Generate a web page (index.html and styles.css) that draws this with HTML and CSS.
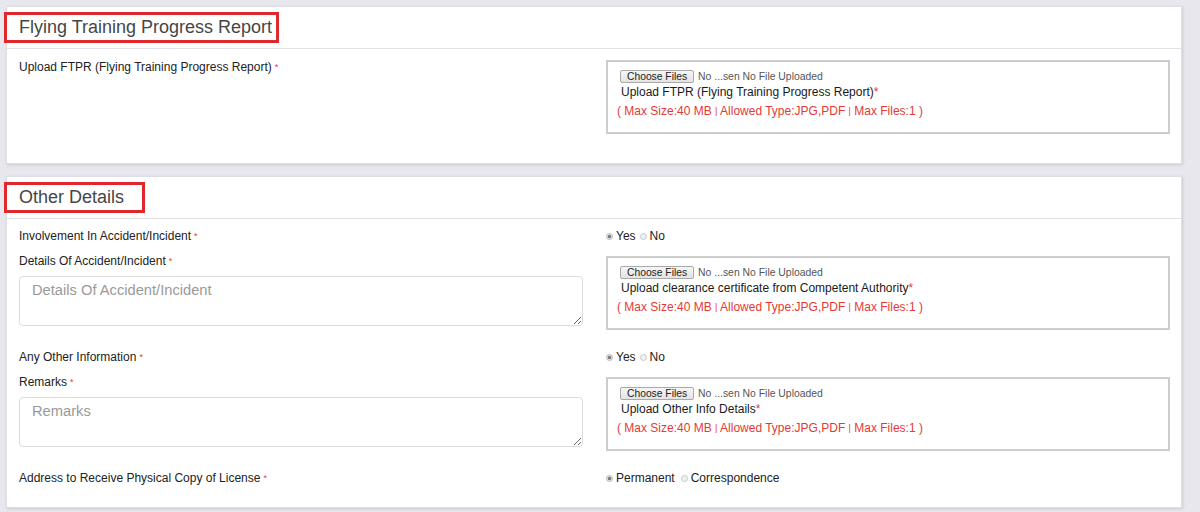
FILE: index.html
```html
<!DOCTYPE html>
<html lang="en">
<head>
<meta charset="utf-8">
<title>Flying Training Progress Report</title>
<link rel="stylesheet" href="styles.css">
</head>
<body>
<section class="card">
  <header class="card-head">
    <h2 class="title title-a">Flying Training Progress Report</h2>
  </header>
  <div class="card-body body-a">
    <div class="row">
      <div class="label">Upload FTPR (Flying Training Progress Report)<span class="req">*</span></div>
      <div class="filebox">
        <div class="file-line"><button class="choose" type="button">Choose Files</button><span class="nofile">No ...sen No File Uploaded</span></div>
        <div class="file-title">Upload FTPR (Flying Training Progress Report)<span class="star">*</span></div>
        <div class="file-hint">( Max Size:40 MB <span class="pipe">|</span> Allowed Type:JPG,PDF <span class="pipe">|</span> Max Files:1 )</div>
      </div>
    </div>
  </div>
</section>

<section class="card">
  <header class="card-head">
    <h2 class="title title-b">Other Details</h2>
  </header>
  <div class="card-body body-b">
    <div class="row row-radio">
      <div class="label">Involvement In Accident/Incident<span class="req">*</span></div>
      <div class="radios"><span class="radio on"></span><span class="opt">Yes</span><span class="radio"></span><span class="opt">No</span></div>
    </div>
    <div class="row row-file">
      <div>
        <div class="label">Details Of Accident/Incident<span class="req">*</span></div>
        <textarea class="area" placeholder="Details Of Accident/Incident"></textarea>
      </div>
      <div class="filebox">
        <div class="file-line"><button class="choose" type="button">Choose Files</button><span class="nofile">No ...sen No File Uploaded</span></div>
        <div class="file-title">Upload clearance certificate from Competent Authority<span class="star">*</span></div>
        <div class="file-hint">( Max Size:40 MB <span class="pipe">|</span> Allowed Type:JPG,PDF <span class="pipe">|</span> Max Files:1 )</div>
      </div>
    </div>
    <div class="row row-radio">
      <div class="label">Any Other Information<span class="req">*</span></div>
      <div class="radios"><span class="radio on"></span><span class="opt">Yes</span><span class="radio"></span><span class="opt">No</span></div>
    </div>
    <div class="row row-file">
      <div>
        <div class="label">Remarks<span class="req">*</span></div>
        <textarea class="area" placeholder="Remarks"></textarea>
      </div>
      <div class="filebox">
        <div class="file-line"><button class="choose" type="button">Choose Files</button><span class="nofile">No ...sen No File Uploaded</span></div>
        <div class="file-title">Upload Other Info Details<span class="star">*</span></div>
        <div class="file-hint">( Max Size:40 MB <span class="pipe">|</span> Allowed Type:JPG,PDF <span class="pipe">|</span> Max Files:1 )</div>
      </div>
    </div>
    <div class="row row-last">
      <div class="label">Address to Receive Physical Copy of License<span class="req">*</span></div>
      <div class="radios"><span class="radio on"></span><span class="opt tight">Permanent</span><span class="radio"></span><span class="opt">Correspondence</span></div>
    </div>
  </div>
</section>
</body>
</html>
```

FILE: styles.css
```css
* { box-sizing: border-box; }

body {
  margin: 0;
  padding: 6px 18px 0 6px;
  background: #e8e7ee;
  font-family: "Liberation Sans", Arial, sans-serif;
  color: #333;
}

.card {
  background: #fff;
  border: 1px solid #dedde3;
  box-shadow: 1px 1px 3px rgba(0, 0, 0, 0.12);
  margin-bottom: 12px;
}

.card-head {
  height: 42px;
  border-bottom: 1px solid #e2e2e6;
  padding-top: 5px;
}

.title {
  display: inline-block;
  margin: 0 0 0 -3px;
  height: 31px;
  border: 3px solid #e0272b;
  padding: 0 4px 0 12px;
  font-size: 18px;
  font-weight: normal;
  line-height: 25px;
  color: #464646;
}

.title-b { padding-right: 18px; }

.card-body { padding: 11px 11px 29px 12px; }
.body-b { padding-top: 10px; padding-bottom: 22px; }

.row {
  display: grid;
  grid-template-columns: 1fr 1fr;
  column-gap: 23px;
  align-items: start;
}

.row-radio { margin-bottom: 11px; }
.row-file { margin-bottom: 20px; }

.label {
  font-size: 12px;
  line-height: 14px;
  color: #222;
}

.req {
  color: #e53935;
  font-size: 9px;
  margin-left: 3px;
  vertical-align: 1px;
}

.radios {
  font-size: 12px;
  line-height: 14px;
  color: #222;
  display: flex;
  align-items: center;
}

.radio {
  display: inline-block;
  flex: none;
  width: 7px;
  height: 7px;
  border-radius: 50%;
  border: 1px solid #c8c8c8;
  background: #f0f0f0;
  margin: 0 3px 0 0;
}

.radio.on {
  background: radial-gradient(circle, #808080 0 1.6px, #ececec 2.1px);
  border-color: #b8b8b8;
}

.opt { margin-right: 4px; }
.opt.tight { margin-right: 6px; }
.radios .radio:last-of-type:not(.on) { margin-right: 4px; }

.area {
  display: block;
  width: 100%;
  height: 50px;
  margin-top: 8px;
  border: 1px solid #dcdcdc;
  border-radius: 4px;
  padding: 5px 12px;
  font-family: "Liberation Sans", Arial, sans-serif;
  font-size: 14.7px;
  line-height: 17px;
  color: #555;
  resize: vertical;
}

.area::placeholder { color: #9a9a9a; }

.row-file .filebox { margin-top: 2px; }

.filebox {
  border: 2px solid #cdcdcd;
  padding: 8px 12px 13px 12px;
  min-height: 74px;
}

.file-line {
  display: flex;
  align-items: center;
  height: 13px;
}

.choose {
  font-family: "Liberation Sans", Arial, sans-serif;
  font-size: 10.3px;
  line-height: 11px;
  height: 13px;
  padding: 0 6px;
  margin: 0;
  border: 1px solid #a9a9a9;
  border-radius: 2px;
  background: linear-gradient(#f6f6f6, #e3e3e3);
  color: #222;
}

.nofile {
  font-size: 10.4px;
  color: #555;
  margin-left: 4px;
}

.file-title {
  margin-top: 1px;
  margin-left: 1px;
  font-size: 12px;
  line-height: 16px;
  color: #1a1a1a;
}

.star { color: #e53935; }

.file-hint {
  margin-top: 3px;
  margin-left: -3px;
  font-size: 12px;
  line-height: 16px;
  color: #e53935;
}

.pipe {
  font-size: 9px;
  vertical-align: 1px;
}
```
